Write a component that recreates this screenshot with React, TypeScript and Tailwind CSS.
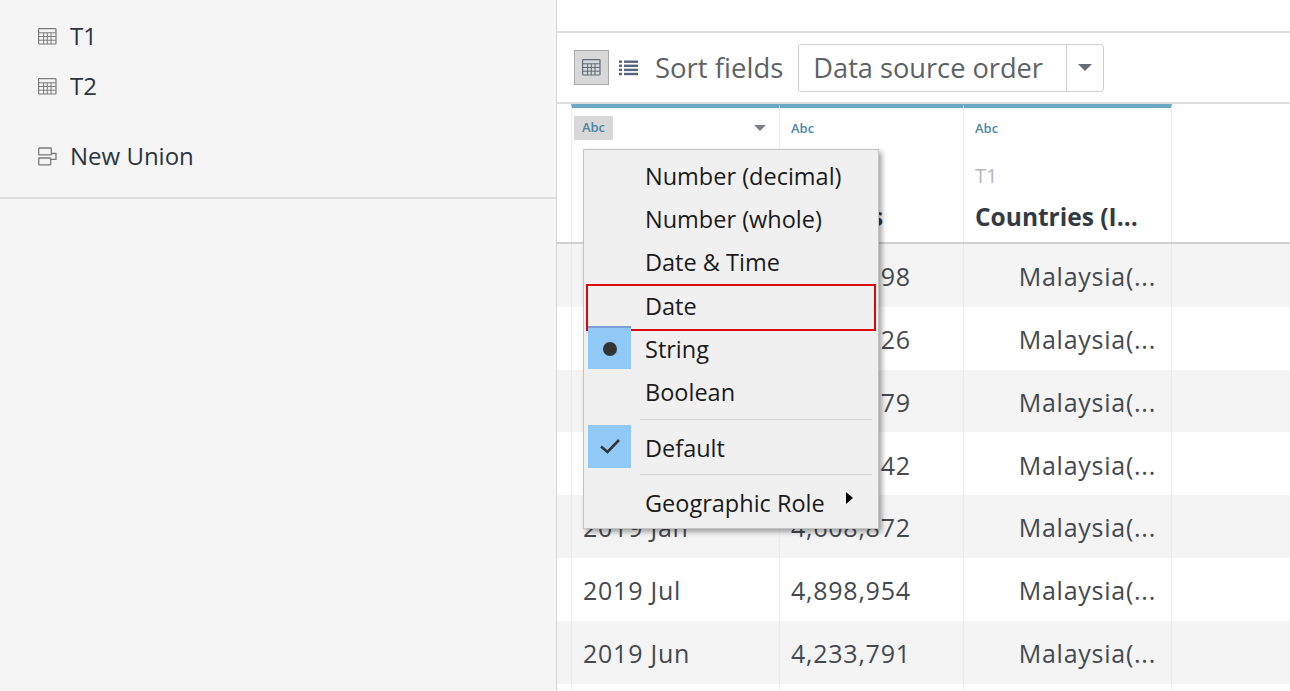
import React from "react";

const rows = [
  { month: "2019 Apr", value: "4,271,798" },
  { month: "2019 Aug", value: "4,522,126" },
  { month: "2019 Dec", value: "4,331,179" },
  { month: "2019 Feb", value: "4,503,742" },
  { month: "2019 Jan", value: "4,608,872" },
  { month: "2019 Jul", value: "4,898,954" },
  { month: "2019 Jun", value: "4,233,791" },
  { month: "2019 Mar", value: "4,476,023" },
];

function TableIcon({ className }: { className?: string }) {
  return (
    <svg width="19" height="17" viewBox="0 0 19 17" className={className} fill="none" stroke="currentColor" strokeWidth="1.2">
      <rect x="0.6" y="0.6" width="17.4" height="15.4" rx="0.8" />
      <path d="M0.6 4.8H18M0.6 8.5H18M0.6 12.2H18M5.6 4.8V16M9.3 4.8V16M13 4.8V16" strokeWidth="1" />
    </svg>
  );
}

function UnionIcon() {
  return (
    <svg width="19" height="19" viewBox="0 0 19 19" fill="none" stroke="#7b7b7b" strokeWidth="1.3">
      <rect x="0.7" y="1" width="12.6" height="6.8" rx="0.6" />
      <rect x="0.7" y="11" width="12" height="6.8" rx="0.6" />
      <path d="M13.3 6.5H18V12.4H12.7" />
    </svg>
  );
}

function SourceRow({ label, icon, className }: { label: string; icon: React.ReactNode; className?: string }) {
  return (
    <div className={"flex items-center h-[30px] pl-[38px] " + (className ?? "")}>
      <div className="w-[32px] flex">{icon}</div>
      <span className="text-[24px] leading-none text-[#2b3440]">{label}</span>
    </div>
  );
}

function Sidebar() {
  return (
    <div className="w-[557px] shrink-0 bg-[#f5f5f5] border-r border-[#d6d6d6] h-full">
      <div className="h-[199px] border-b-2 border-[#dcdcdc] pt-[21px]">
        <SourceRow label="T1" icon={<TableIcon className="text-[#7b7b7b]" />} />
        <SourceRow label="T2" icon={<TableIcon className="text-[#7b7b7b]" />} className="mt-[20px]" />
        <SourceRow label="New Union" icon={<UnionIcon />} className="mt-[40px]" />
      </div>
    </div>
  );
}

function Toolbar() {
  return (
    <div className="h-[73px] flex items-center border-t-2 border-b-2 border-[#dcdcdc] pl-[17px]">
      <div className="w-[35px] h-[35px] bg-[#d8d8d8] border border-[#a9a9a9] flex items-center justify-center">
        <TableIcon className="text-[#5f6b7c]" />
      </div>
      <svg width="19" height="16" viewBox="0 0 19 16" className="ml-[10px]" fill="#56657c">
        <rect x="0" y="0.5" width="3" height="2.4" />
        <rect x="5" y="0.5" width="14" height="2.4" />
        <rect x="0" y="4.6" width="3" height="2.4" />
        <rect x="5" y="4.6" width="14" height="2.4" />
        <rect x="0" y="8.7" width="3" height="2.4" />
        <rect x="5" y="8.7" width="14" height="2.4" />
        <rect x="0" y="12.8" width="3" height="2.4" />
        <rect x="5" y="12.8" width="14" height="2.4" />
      </svg>
      <span className="ml-[17px] text-[27.5px] leading-none text-[#5d6266]">Sort fields</span>
      <div className="ml-[15px] w-[306px] h-[48px] bg-white border border-[#cfcfcf] rounded-[3px] flex items-center">
        <span className="flex-1 pl-[14px] text-[27.2px] leading-none text-[#5d6266]">Data source order</span>
        <div className="w-[37px] h-full border-l border-[#cfcfcf] flex items-center justify-center">
          <div className="w-0 h-0 border-l-[7px] border-r-[7px] border-t-[7px] border-l-transparent border-r-transparent border-t-[#666d75]" />
        </div>
      </div>
    </div>
  );
}

function TableHeader() {
  return (
    <div className="flex h-[140px] border-b-2 border-[#cfcfcf]">
      <div className="w-[14px] shrink-0" />
      <div className="w-[209px] shrink-0 border-t-[4px] border-[#6ba8c6] border-r border-r-[#ececec] border-l border-l-[#ececec] pl-[2px] pt-[8px]">
        <div className="flex items-center justify-between pr-[13px]">
          <span className="w-[39px] h-[24px] bg-[#d8d8d8] flex items-center justify-center text-[13px] font-semibold text-[#4f86a3]">Abc</span>
          <div className="w-0 h-0 border-l-[6px] border-r-[6px] border-t-[6px] border-l-transparent border-r-transparent border-t-[#7a8088]" />
        </div>
      </div>
      <div className="w-[184px] shrink-0 border-t-[4px] border-[#6ba8c6] border-r border-r-[#ececec] pl-[11px] pt-[14px]">
        <div className="text-[13px] font-semibold leading-none text-[#4f86a3]">Abc</div>
        <div className="mt-[31px] text-[20px] leading-none text-[#b4b8bb]">T1</div>
        <div className="mt-[19px] text-[24.5px] leading-none font-bold text-[#333a44]">Visitors</div>
      </div>
      <div className="w-[208px] shrink-0 border-t-[4px] border-[#6ba8c6] border-r border-r-[#ececec] pl-[11px] pt-[14px]">
        <div className="text-[13px] font-semibold leading-none text-[#4f86a3]">Abc</div>
        <div className="mt-[31px] text-[20px] leading-none text-[#b4b8bb]">T1</div>
        <div className="mt-[19px] text-[24.5px] leading-none font-bold text-[#333a44]">Countries (I...</div>
      </div>
    </div>
  );
}

function TableRows() {
  return (
    <div>
      {rows.map((row, i) => (
        <div key={row.month} className={"flex h-[62.8px] text-[25px] tracking-[0.75px] text-[#444a50] " + (i % 2 === 0 ? "bg-[#f4f4f4]" : "bg-white")}>
          <div className="w-[14px] shrink-0" />
          <div className="w-[209px] shrink-0 flex items-center pl-[11px] pt-[3px] border-x border-[#ececec]">{row.month}</div>
          <div className="w-[184px] shrink-0 flex items-center pl-[11px] pt-[3px] border-r border-[#ececec]">{row.value}</div>
          <div className="w-[208px] shrink-0 flex items-center justify-end pr-[15px] pt-[3px] border-r border-[#ececec]">Malaysia(...</div>
        </div>
      ))}
    </div>
  );
}

function MenuItem({ label, mark, boxed }: { label: string; mark?: React.ReactNode; boxed?: boolean }) {
  return (
    <div className="relative h-[43.3px] flex items-center pl-[61px] text-[23.5px] leading-none text-[#1b1b1b]">
      {mark}
      <span>{label}</span>
      {boxed && <div className="absolute left-[2px] right-[2px] top-[-1px] h-[47px] border-2 border-[#d9090f]" />}
    </div>
  );
}

function TypeMenu() {
  return (
    <div className="absolute left-[26px] top-[149px] w-[296px] h-[380px] bg-[#f0f0f0] border border-[#c4c4c4] shadow-[3px_3px_5px_rgba(0,0,0,0.35)] pt-[5px]">
      <MenuItem label="Number (decimal)" />
      <MenuItem label="Number (whole)" />
      <MenuItem label="Date & Time" />
      <MenuItem label="Date" boxed />
      <MenuItem
        label="String"
        mark={
          <div className="absolute left-[4px] top-[-2px] w-[43px] h-[43px] bg-[#90c8f6] border-t-2 border-[#7ea0d4] flex items-center justify-center">
            <div className="w-[14px] h-[14px] rounded-full bg-[#333]" />
          </div>
        }
      />
      <MenuItem label="Boolean" />
      <div className="ml-[56px] mr-[6px] mt-[4px] h-px bg-[#d4d4d4]" />
      <div className="mt-[7px]">
        <MenuItem
          label="Default"
          mark={
            <div className="absolute left-[4px] top-[-2px] w-[43px] h-[43px] bg-[#90c8f6] flex items-center justify-center">
              <svg width="22" height="18" viewBox="0 0 22 18" fill="none" stroke="#333" strokeWidth="2.6">
                <path d="M2 9.5L8.5 15L20 3" />
              </svg>
            </div>
          }
        />
      </div>
      <div className="ml-[56px] mr-[6px] mt-[4px] h-px bg-[#d4d4d4]" />
      <div className="mt-[7px] relative">
        <MenuItem label="Geographic Role" />
        <div className="absolute left-[262px] top-[10px] w-0 h-0 border-t-[6px] border-b-[6px] border-l-[7px] border-t-transparent border-b-transparent border-l-black" />
      </div>
    </div>
  );
}

export default function App() {
  return (
    <div className="flex w-[1290px] h-[691px] overflow-hidden bg-white font-['Open_Sans',sans-serif]">
      <Sidebar />
      <div className="relative flex-1 pt-[31px]">
        <Toolbar />
        <TableHeader />
        <TableRows />
        <TypeMenu />
      </div>
    </div>
  );
}
